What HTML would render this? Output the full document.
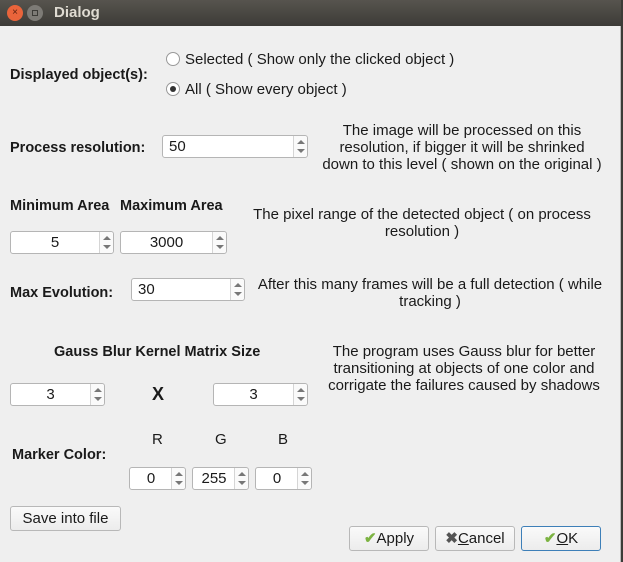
<!DOCTYPE html>
<html><head><style>
*{box-sizing:border-box;margin:0;padding:0}
body{width:623px;height:562px;background:#efefef;font-family:"Liberation Sans",sans-serif;font-size:15px;color:#1a1a1a;position:relative;overflow:hidden}
.a{position:absolute;white-space:nowrap}
.b{font-weight:bold;font-size:14.5px}
.c{text-align:center;line-height:17px}
.sp{position:absolute;background:#fff;border:1px solid #b5b5b5;border-radius:3px;height:23px;font-size:15px;line-height:22px}
.sp .v{position:absolute;top:0}
.sp .ar{position:absolute;right:0;top:0;bottom:0;width:14px;border-left:1px solid #d5d5d5;background:#fafafa;border-radius:0 3px 3px 0}
.sp .ar:before{content:"";position:absolute;left:3px;top:4px;border:4px solid transparent;border-bottom:4px solid #777;border-top:0}
.sp .ar:after{content:"";position:absolute;left:3px;bottom:4px;border:4px solid transparent;border-top:4px solid #777;border-bottom:0}
.btn{position:absolute;border:1px solid #b8b8b8;border-radius:3px;background:linear-gradient(#fafafa,#ececec);height:25px;line-height:24px;text-align:center;font-size:15px}
.rd{position:absolute;width:14px;height:14px;border-radius:50%;border:1px solid #999;background:#fff}
</style></head><body>
<div class="a" style="left:0;top:0;width:623px;height:26px;background:linear-gradient(#57544e,#3c3b37)"></div>
<div class="a" style="left:7px;top:5px;width:16px;height:16px;border-radius:50%;background:#e9643b;color:#5a2010;font-size:10px;text-align:center;line-height:16px">×</div>
<div class="a" style="left:27px;top:5px;width:16px;height:16px;border-radius:50%;background:#7d7b76"><div style="margin:5px;width:6px;height:6px;border:1px solid #3c3b37"></div></div>
<div class="a" style="left:54px;top:4px;color:#dfdbd2;font-weight:bold;font-size:15px">Dialog</div>
<div class="a" style="left:620px;top:26px;width:1px;height:536px;background:#bbb"></div>
<div class="a" style="left:621px;top:0;width:2px;height:562px;background:#3c3b37"></div>

<div class="a b" style="left:10px;top:67px">Displayed object(s):</div>
<div class="rd" style="left:166px;top:52px"></div>
<div class="a" style="left:185px;top:51px">Selected ( Show only the clicked object )</div>
<div class="rd" style="left:166px;top:82px"><div style="margin:3px;width:6px;height:6px;border-radius:50%;background:#333"></div></div>
<div class="a" style="left:185px;top:81px">All ( Show every object )</div>

<div class="a b" style="left:10px;top:140px">Process resolution:</div>
<div class="sp" style="left:162px;top:135px;width:146px"><span class="v" style="left:6px">50</span><div class="ar"></div></div>
<div class="a c" style="left:302px;top:122px;width:320px">The image will be processed on this<br>resolution, if bigger it will be shrinked<br>down to this level ( shown on the original )</div>

<div class="a b" style="left:10px;top:198px">Minimum Area</div>
<div class="a b" style="left:120px;top:198px">Maximum Area</div>
<div class="sp" style="left:10px;top:231px;width:104px"><span class="v" style="left:0;width:88px;text-align:center">5</span><div class="ar"></div></div>
<div class="sp" style="left:120px;top:231px;width:107px"><span class="v" style="left:0;width:91px;text-align:center">3000</span><div class="ar"></div></div>
<div class="a c" style="left:242px;top:206px;width:360px">The pixel range of the detected object ( on process<br>resolution )</div>

<div class="a b" style="left:10px;top:285px">Max Evolution:</div>
<div class="sp" style="left:131px;top:278px;width:114px"><span class="v" style="left:6px">30</span><div class="ar"></div></div>
<div class="a c" style="left:246px;top:276px;width:368px">After this many frames will be a full detection ( while<br>tracking )</div>

<div class="a b" style="left:54px;top:344px">Gauss Blur Kernel Matrix Size</div>
<div class="a c" style="left:314px;top:343px;width:300px">The program uses Gauss blur for better<br>transitioning at objects of one color and<br>corrigate the failures caused by shadows</div>
<div class="sp" style="left:10px;top:383px;width:95px"><span class="v" style="left:0;width:79px;text-align:center">3</span><div class="ar"></div></div>
<div class="a" style="left:152px;top:384px;font-weight:bold;font-size:18px">X</div>
<div class="sp" style="left:213px;top:383px;width:95px"><span class="v" style="left:0;width:79px;text-align:center">3</span><div class="ar"></div></div>

<div class="a" style="left:152px;top:431px">R</div>
<div class="a" style="left:215px;top:431px">G</div>
<div class="a" style="left:278px;top:431px">B</div>
<div class="a b" style="left:12px;top:447px">Marker Color:</div>
<div class="sp" style="left:129px;top:467px;width:57px"><span class="v" style="left:0;width:42px;text-align:center">0</span><div class="ar"></div></div>
<div class="sp" style="left:192px;top:467px;width:57px"><span class="v" style="left:0;width:42px;text-align:center">255</span><div class="ar"></div></div>
<div class="sp" style="left:255px;top:467px;width:57px"><span class="v" style="left:0;width:42px;text-align:center">0</span><div class="ar"></div></div>

<div class="btn" style="left:10px;top:506px;width:111px">Save into file</div>
<div class="btn" style="left:349px;top:526px;width:80px"><span style="color:#7cb342;font-weight:bold">✔</span>Apply</div>
<div class="btn" style="left:435px;top:526px;width:80px"><span style="color:#555;font-weight:bold">✖</span><u>C</u>ancel</div>
<div class="btn" style="left:521px;top:526px;width:80px;border-color:#3d7fb8"><span style="color:#7cb342;font-weight:bold">✔</span><u>O</u>K</div>
</body></html>
